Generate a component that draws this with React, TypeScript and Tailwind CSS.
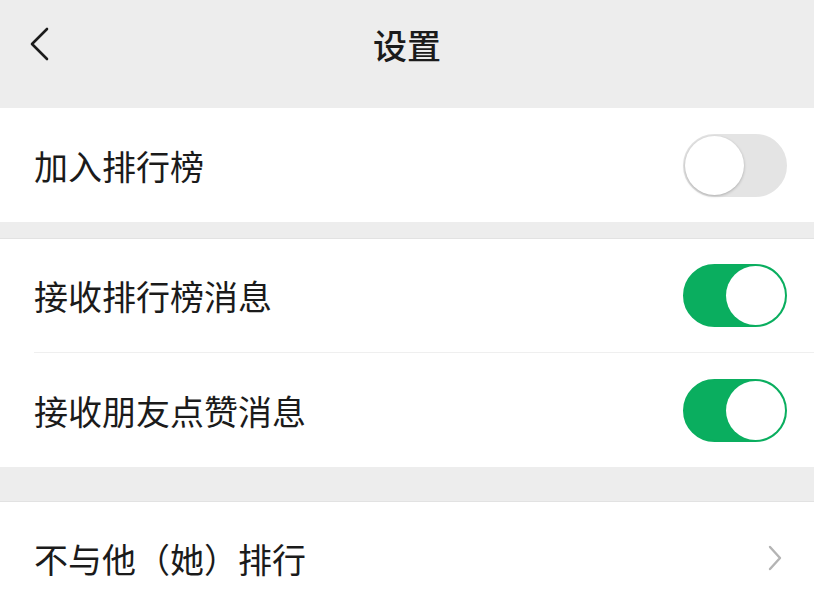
import { useState } from 'react';

type SwitchProps = {
  checked: boolean;
  onChange: (v: boolean) => void;
};

function Switch({ checked, onChange }: SwitchProps) {
  return (
    <button
      type="button"
      onClick={() => onChange(!checked)}
      className={`relative w-[104px] h-[63px] rounded-full border-2 transition-colors ${
        checked ? 'bg-[#0aae5f] border-[#0aae5f]' : 'bg-[#e4e4e4] border-[#e4e4e4]'
      }`}
    >
      <span
        className={`absolute top-0 w-[59px] h-[59px] rounded-full bg-white transition-all ${
          checked ? 'left-[41px]' : 'left-0 shadow-[0_1px_3px_rgba(0,0,0,0.25)]'
        }`}
      />
    </button>
  );
}

function Row({ label, children, divider }: { label: string; children: React.ReactNode; divider?: boolean }) {
  return (
    <div className="pl-[34px]">
      <div
        className={`flex items-center justify-between h-[114px] pr-[27px] ${
          divider ? 'border-b border-[#efefef]' : ''
        }`}
      >
        <span className="text-[34px] text-[#1b1b1b]">{label}</span>
        {children}
      </div>
    </div>
  );
}

export default function App() {
  const [joinRank, setJoinRank] = useState(false);
  const [rankMsg, setRankMsg] = useState(true);
  const [likeMsg, setLikeMsg] = useState(true);

  return (
    <div
      className="min-h-screen bg-[#ededed] overflow-hidden"
      style={{ fontFamily: '"Noto Sans CJK SC", "Noto Sans", sans-serif' }}
    >
      {/* 상단 헤더 */}
      <header className="grid grid-cols-[1fr_auto_1fr] items-center h-[88px] mb-[20px]">
        <button type="button" className="justify-self-start pl-[28px]">
          <svg width="24" height="36" viewBox="0 0 24 36" fill="none">
            <path d="M19 3 L4 18 L19 33" stroke="#1b1b1b" strokeWidth="2.6" strokeLinecap="round" strokeLinejoin="round" />
          </svg>
        </button>
        <h1 className="text-[34px] font-medium text-[#1b1b1b]">设置</h1>
        <div />
      </header>

      <section className="bg-white">
        <Row label="加入排行榜">
          <Switch checked={joinRank} onChange={setJoinRank} />
        </Row>
      </section>

      <section className="bg-white mt-[16px] border-t border-[#e2e2e2]">
        <Row label="接收排行榜消息" divider>
          <Switch checked={rankMsg} onChange={setRankMsg} />
        </Row>
        <Row label="接收朋友点赞消息">
          <Switch checked={likeMsg} onChange={setLikeMsg} />
        </Row>
      </section>

      <section className="bg-white mt-[34px] border-t border-[#e2e2e2]">
        <div className="flex items-center justify-between h-[112px] pl-[34px] pr-[32px]">
          <span className="text-[34px] text-[#1b1b1b]">不与他（她）排行</span>
          <svg width="14" height="26" viewBox="0 0 14 26" fill="none">
            <path d="M2 2 L12 13 L2 24" stroke="#b4b4b4" strokeWidth="2.4" strokeLinecap="round" strokeLinejoin="round" />
          </svg>
        </div>
      </section>
    </div>
  );
}
